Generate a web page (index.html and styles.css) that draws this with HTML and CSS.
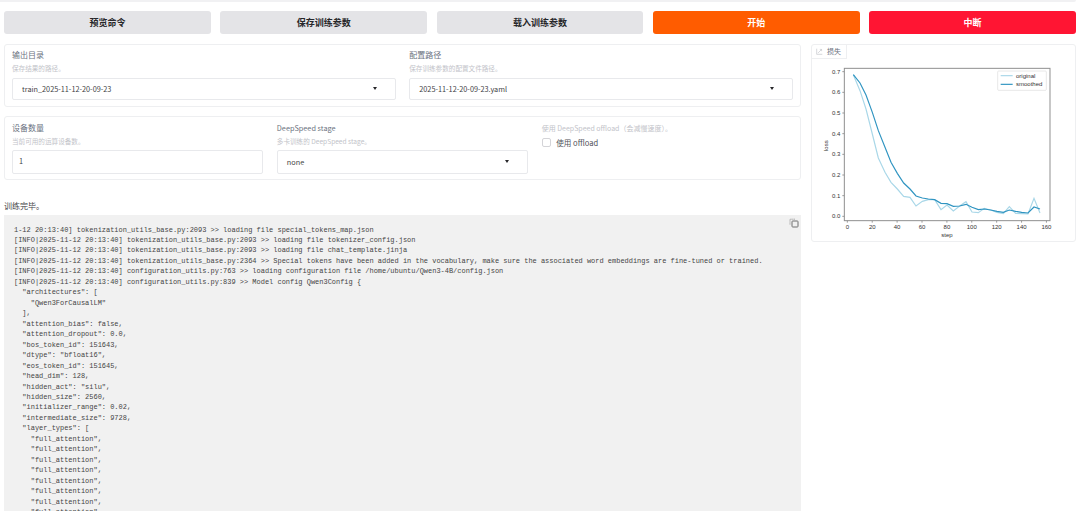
FILE: index.html
```html
<!DOCTYPE html>
<html lang="zh">
<head>
<meta charset="utf-8">
<title>训练</title>
<link rel="stylesheet" href="styles.css">
</head>
<body>
<div class="strip"></div>
<div class="page">
  <div class="actions">
    <button class="btn">预览命令</button>
    <button class="btn">保存训练参数</button>
    <button class="btn">载入训练参数</button>
    <button class="btn start">开始</button>
    <button class="btn stop">中断</button>
  </div>
  <div class="main">
    <div class="left">
      <section class="panel two">
        <div class="field">
          <div class="label">输出目录</div>
          <div class="hint">保存结果的路径。</div>
          <div class="input select"><span>train_2025-11-12-20-09-23</span><i class="caret"></i></div>
        </div>
        <div class="field">
          <div class="label">配置路径</div>
          <div class="hint">保存训练参数的配置文件路径。</div>
          <div class="input select"><span>2025-11-12-20-09-23.yaml</span><i class="caret"></i></div>
        </div>
      </section>
      <section class="panel three">
        <div class="field">
          <div class="label">设备数量</div>
          <div class="hint">当前可用的运算设备数。</div>
          <div class="input num"><span>1</span></div>
        </div>
        <div class="field">
          <div class="label latin">DeepSpeed stage</div>
          <div class="hint">多卡训练的 DeepSpeed stage。</div>
          <div class="input select"><span>none</span><i class="caret"></i></div>
        </div>
        <div class="field">
          <div class="hint top">使用 DeepSpeed offload（会减慢速度）。</div>
          <label class="check"><i class="box"></i><span>使用 offload</span></label>
        </div>
      </section>
      <p class="message">训练完毕。</p>
      <div class="log">
        <svg class="copy" viewBox="0 0 10 10" width="10" height="10" aria-hidden="true"><path d="M1 6.5V1.200h5" fill="none" stroke="#8a8a8a" stroke-width=".8" stroke-dasharray="1.200 .7"/><rect x="3" y="3" width="6" height="6" rx=".7" fill="none" stroke="#6f6f6f" stroke-width="1"/></svg>
<pre>1-12 20:13:40] tokenization_utils_base.py:2093 &gt;&gt; loading file special_tokens_map.json
[INFO|2025-11-12 20:13:40] tokenization_utils_base.py:2093 &gt;&gt; loading file tokenizer_config.json
[INFO|2025-11-12 20:13:40] tokenization_utils_base.py:2093 &gt;&gt; loading file chat_template.jinja
[INFO|2025-11-12 20:13:40] tokenization_utils_base.py:2364 &gt;&gt; Special tokens have been added in the vocabulary, make sure the associated word embeddings are fine-tuned or trained.
[INFO|2025-11-12 20:13:40] configuration_utils.py:763 &gt;&gt; loading configuration file /home/ubuntu/Qwen3-4B/config.json
[INFO|2025-11-12 20:13:40] configuration_utils.py:839 &gt;&gt; Model config Qwen3Config {
  "architectures": [
    "Qwen3ForCausalLM"
  ],
  "attention_bias": false,
  "attention_dropout": 0.0,
  "bos_token_id": 151643,
  "dtype": "bfloat16",
  "eos_token_id": 151645,
  "head_dim": 128,
  "hidden_act": "silu",
  "hidden_size": 2560,
  "initializer_range": 0.02,
  "intermediate_size": 9728,
  "layer_types": [
    "full_attention",
    "full_attention",
    "full_attention",
    "full_attention",
    "full_attention",
    "full_attention",
    "full_attention",
    "full_attention",</pre>
      </div>
    </div>
    <aside class="chart">
      <div class="tab">
        <svg viewBox="0 0 10 10" width="7" height="7" aria-hidden="true"><path d="M1 1v8h8M3 7l5-5M5.500 2H8v2.500" fill="none" stroke="#c4c6cb" stroke-width="1"/></svg>
        <span>损失</span>
      </div>
      <svg class="plot" viewBox="0 15 825 525" width="275" height="175" role="img" aria-label="损失曲线">
        <g class="ticks">
          <path d="M112 53h6M112 115h6M112 177h6M112 239h6M112 301h6M112 363h6M112 425h6M112 487h6M127 500v6M201.700 500v6M276.300 500v6M351 500v6M425.700 500v6M500.300 500v6M575 500v6M649.700 500v6M724.300 500v6"/>
        </g>
        <polyline class="orig" points="145,62 165,110 183,165 202,240 220,312 240,355 258,385 277,405 296,427 315,430 333,456 352,442 370,437 389,437 408,467 426,453 445,471 464,456 483,443 501,474 520,476 538,463 557,468 576,475 595,479 613,458 632,478 650,479 669,480 687,433 705,477"/>
        <polyline class="smooth" points="145,62 165,87 183,123 202,175 220,230 240,280 258,325 277,358 296,387 315,405 333,426 352,432 370,435 389,437 408,448 426,449 445,457 464,456 483,451 501,460 520,467 538,465 557,468 576,472 595,475 613,468 632,472 650,475 669,477 687,459 705,465"/>
        <rect class="frame" x="118" y="43" width="617" height="457"/>
        <g class="ylab">
          <text x="106" y="59">0.7</text><text x="106" y="121">0.6</text><text x="106" y="183">0.5</text><text x="106" y="245">0.4</text><text x="106" y="307">0.3</text><text x="106" y="369">0.2</text><text x="106" y="431">0.1</text><text x="106" y="493">0.0</text>
        </g>
        <g class="xlab">
          <text x="127" y="526">0</text><text x="201.700" y="526">20</text><text x="276.300" y="526">40</text><text x="351" y="526">60</text><text x="425.700" y="526">80</text><text x="500.300" y="526">100</text><text x="575" y="526">120</text><text x="649.700" y="526">140</text><text x="724.300" y="526">160</text>
        </g>
        <text class="axis" x="426" y="549">step</text>
        <text class="axis" transform="translate(68 275) rotate(-90)">loss</text>
        <rect class="legend" x="578" y="51" width="146" height="58" rx="3"/>
        <path class="orig" d="M587 65h36"/>
        <path class="smooth" d="M587 91h36"/>
        <text class="leg" x="633" y="71">original</text>
        <text class="leg" x="633" y="97">smoothed</text>
      </svg>
    </aside>
  </div>
</div>
</body>
</html>
```
FILE: styles.css
```css
* { box-sizing: border-box; }
html, body { margin: 0; height: 511px; overflow: hidden; background: #fff; }
body { font-family: "Noto Sans CJK SC", sans-serif; color: #4b5563; font-size: 8px; }

.strip { height: 2px; margin-right: 4px; border-radius: 0 0 2px 0; background: #f1f1f3; }
.page { padding: 9px 4px 0; }

.actions { display: grid; grid-template-columns: repeat(5, 1fr); gap: 9.500px; }
.btn { height: 23px; padding: 0; border: 0; border-radius: 3px; background: #e4e4e7; color: #27272a; font: 700 9px "Noto Sans CJK SC", sans-serif; }
.btn.start { background: #ff5c00; color: #fff; }
.btn.stop { background: #ff1533; color: #fff; }

.main { display: flex; gap: 10px; margin-top: 9.500px; align-items: flex-start; }
.left { width: 797px; flex: none; }

.panel { border: 1px solid #eeeff1; border-radius: 3px; padding: 4px 7px 0; display: grid; column-gap: 13.500px; }
.panel.two { grid-template-columns: 1fr 1fr; height: 63.500px; }
.panel.three { grid-template-columns: 1fr 1fr 1fr; height: 64px; margin-top: 9px; padding-top: 5px; }

.label { font: 400 8px/12px "Noto Sans CJK SC", sans-serif; color: #6b7280; }
.label.latin { font-size: 7.300px; }
.hint { font: 400 6.600px/10px "Noto Sans CJK SC", sans-serif; color: #c2c3c9; margin-top: 2px; }
.hint.top { margin-top: 1px; font-size: 7px; }
.input { display: flex; align-items: center; justify-content: space-between; height: 22px; margin-top: 5px; border: 1px solid #e8e9ec; border-radius: 2px; padding: 0 9px; font: 400 7.300px "Noto Sans CJK SC", sans-serif; color: #3f3f46; }
.three .input { height: 23.500px; margin-top: 4px; }
.input.num { padding: 0 6px 2px; }
.caret { width: 0; height: 0; margin-right: 9px; border: 2.500px solid transparent; border-top: 3px solid #27272a; border-bottom: 0; }

.check { display: flex; align-items: center; gap: 5px; margin-top: 4px; font: 400 7.600px "Noto Sans CJK SC", sans-serif; color: #52525b; }
.box { width: 9.500px; height: 9.500px; border: 1px solid #d4d4d8; border-radius: 2px; }

.message { margin: 19.500px 0 0; font: 400 8px/12px "Noto Sans CJK SC", sans-serif; color: #3f3f46; }

.log { position: relative; margin-top: 3px; height: 300px; background: #f1f1f1; padding: 10px 10px; overflow: hidden; }
.log pre { margin: 0; font: 400 6.980px/10.470px "Liberation Mono", monospace; color: #444; }
.copy { position: absolute; top: 3px; right: 2px; }

.chart { width: 265px; height: 198.500px; flex: none; border: 1px solid #eeeff1; border-radius: 3px; }
.tab { display: flex; align-items: center; gap: 4px; width: 35px; height: 14px; padding-left: 4px; border-right: 1px solid #eeeff1; border-bottom: 1px solid #eeeff1; font: 400 7px "Noto Sans CJK SC", sans-serif; color: #6b7280; }
.plot { display: block; margin-left: -7px; overflow: visible; }
.frame { fill: none; stroke: #8f8f8f; stroke-width: 3; }
.ticks path { stroke: #666; stroke-width: 2; fill: none; }
.orig, .smooth { fill: none; stroke-width: 3.500; }
.orig { stroke: #a9d7e8; }
.smooth { stroke: #2f94c1; }
.legend { fill: #fff; stroke: #dcdcdc; stroke-width: 2; }
.plot text { font-family: "Liberation Sans", sans-serif; font-size: 18px; fill: #333; }
.ylab text { text-anchor: end; }
.xlab text, .axis { text-anchor: middle; }
```
